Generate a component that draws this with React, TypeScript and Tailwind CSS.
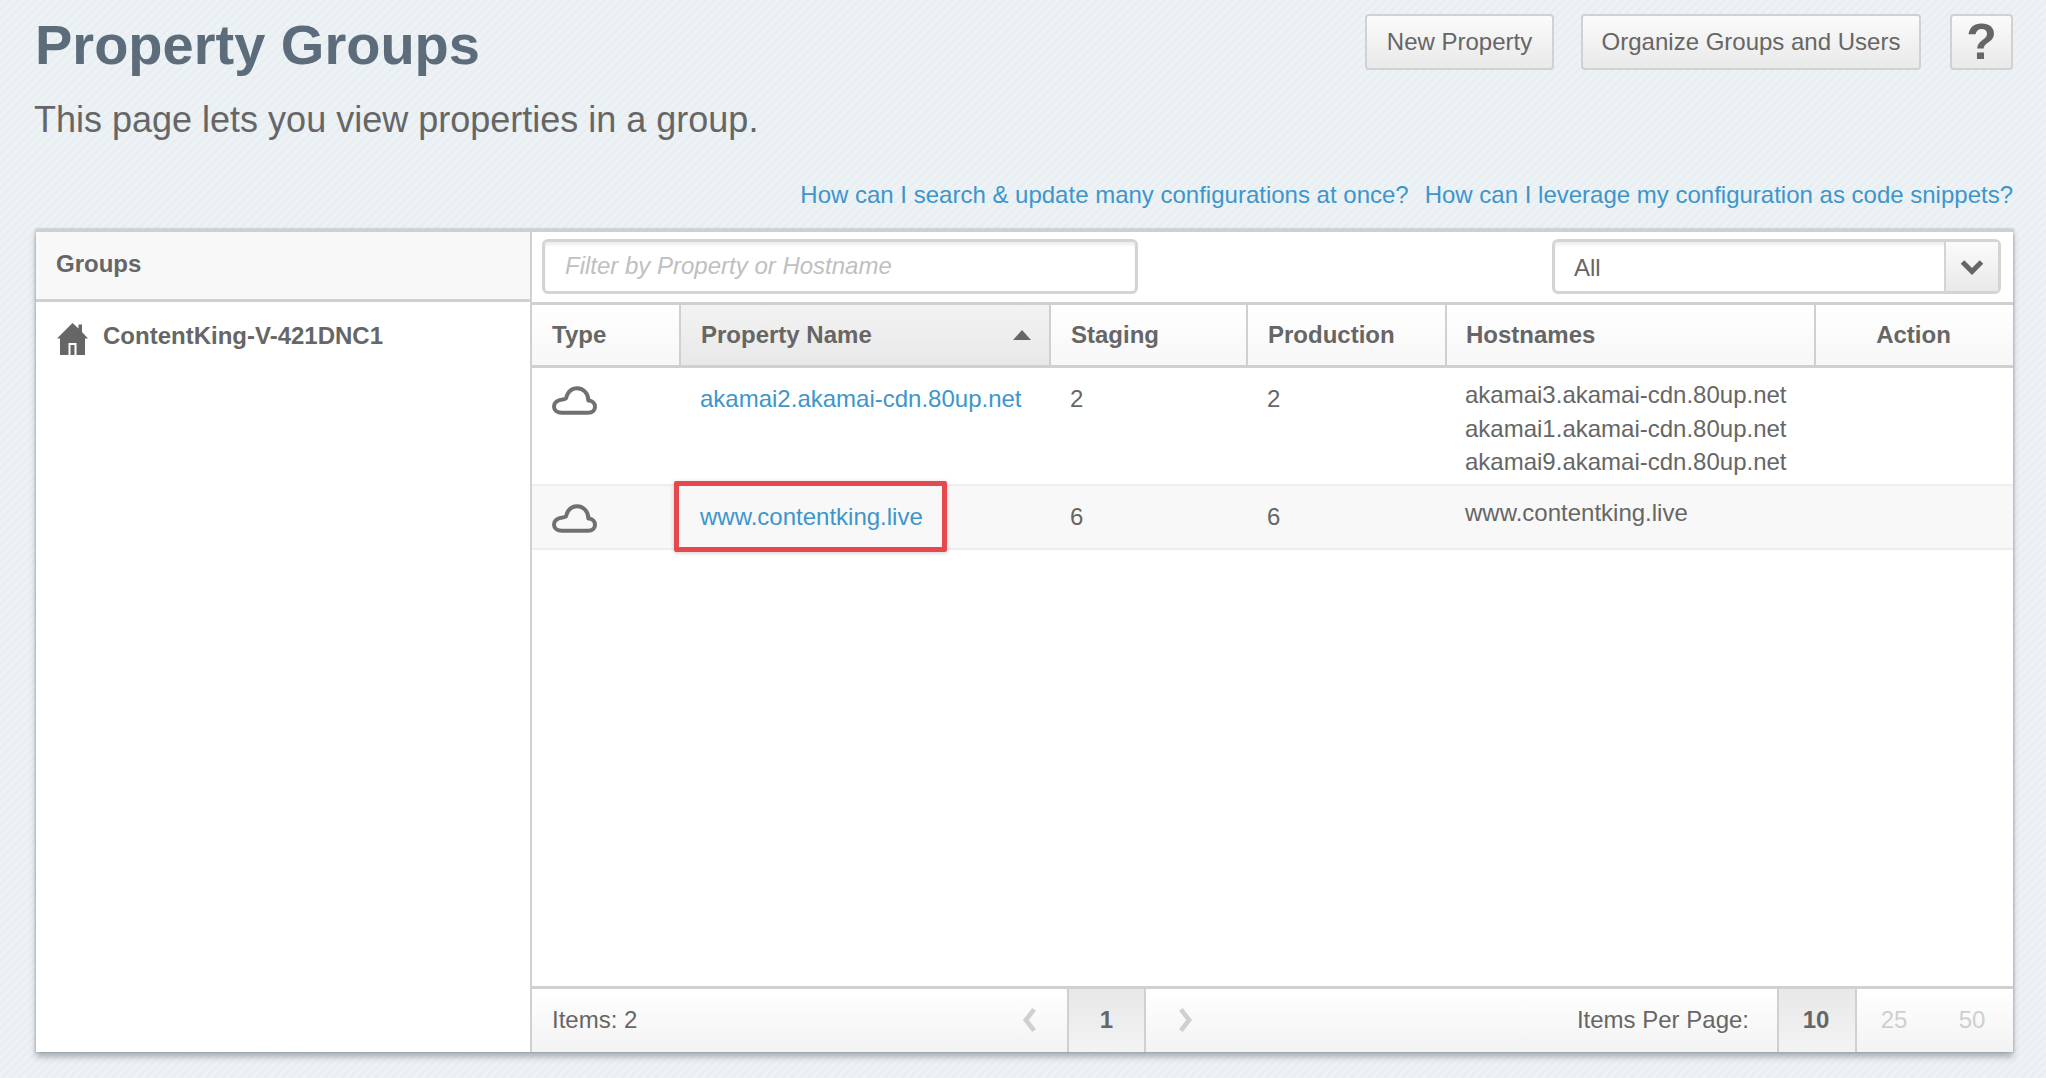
import React from "react";

const Cloud = () => (
  <svg width="45" height="29" viewBox="0 0 45 29" fill="none" stroke="#707070" strokeWidth="4" strokeLinejoin="round" className="block">
    <path d="M10 26.8 H36 C40.6 26.8 43 24.2 43 20.8 C43 17.2 40.4 14.8 36.4 14.6 C36.4 7.6 31.4 2.2 25.2 2.2 C20.6 2.2 17 4.6 15 9.2 C14 13 14 13 10.6 13.4 C5.2 14 2 16.8 2 20.4 C2 24.2 5 26.8 10 26.8 Z" />
  </svg>
);

const Home = () => (
  <svg width="31" height="32" viewBox="0 0 31 32" className="block" fill="#666">
    <path d="M15.5 0 L21.5 5.6 V1.5 H25 V9 L31 15.5 H28 V32 H19.5 V20 H11.5 V32 H3 V15.5 H0 Z" />
    <path d="M13.5 22 H17.5 V32 H13.5 Z" />
  </svg>
);

const Chevron = ({ dir, color, size = 15 }: { dir: "l" | "r" | "d"; color: string; size?: number }) => {
  if (dir === "d")
    return (
      <svg width="24" height="16" viewBox="0 0 24 16" fill="none" stroke={color} strokeWidth="5">
        <path d="M2.5 3 L12 12.5 L21.5 3" />
      </svg>
    );
  return (
    <svg width={size} height="24" viewBox="0 0 15 26" fill="none" stroke={color} strokeWidth="5">
      <path d={dir === "l" ? "M12.5 1.5 L3.5 13 L12.5 24.5" : "M2.5 1.5 L11.5 13 L2.5 24.5"} />
    </svg>
  );
};

const btn =
  "h-[56px] flex items-center justify-center rounded-[4px] border-2 border-[#cfd1d2] bg-gradient-to-b from-[#fbfbfb] to-[#e9e9e9] text-[24px] text-[#666]";

const th = "flex items-center border-r-2 border-[#d0d0d0] pl-[20px] font-bold";

export default function App() {
  return (
    <div className="h-[1078px] w-[2046px] overflow-hidden bg-[repeating-linear-gradient(135deg,#e8eef2_0px,#e8eef2_3px,#edf2f5_3px,#edf2f5_6px)] font-['Liberation_Sans',Arial,sans-serif] text-[24px] text-[#666]">
      <div className="flex h-[229px] flex-col pl-[35px] pr-[33px]">
        <div className="flex items-start justify-between">
          <div>
            <h1 className="pt-[11px] text-[56px] font-bold leading-[68px] text-[#5d6c7b]">Property Groups</h1>
            <p className="-ml-[1px] pt-[17px] text-[36px] leading-[48px]">This page lets you view properties in a group.</p>
          </div>
          <div className="flex gap-[29px] pt-[14px]">
            <div className={`${btn} -mr-[2px] w-[189px]`}>New Property</div>
            <div className={`${btn} w-[340px]`}>Organize Groups and Users</div>
            <div className={`${btn} w-[63px] text-[50px] font-bold`}>?</div>
          </div>
        </div>
        <div className="flex justify-end gap-[16px] pt-[35px] leading-[32px] text-[#3d96cb]">
          <span>How can I search &amp; update many configurations at once?</span>
          <span>How can I leverage my configuration as code snippets?</span>
        </div>
      </div>

      <div className="ml-[36px] flex h-[823px] w-[1977px] border-t-[3px] border-[#d0d0d0] bg-white shadow-[0_5px_6px_rgba(90,100,110,0.45),-1px_0_2px_rgba(90,100,110,0.25),1px_0_2px_rgba(90,100,110,0.25)]">
        <div className="flex w-[496px] shrink-0 flex-col border-r-2 border-[#d0d0d0]">
          <div className="flex h-[70px] items-center border-b-[3px] border-[#d0d0d0] bg-[#f8f8f8] pb-[3px] pl-[20px] font-bold">Groups</div>
          <div className="flex items-center gap-[15px] pl-[21px] pt-[19px] font-bold">
            <Home />
            <span className="-translate-y-[3px]">ContentKing-V-421DNC1</span>
          </div>
        </div>

        <div className="flex min-w-0 flex-1 flex-col">
          <div className="flex h-[70px] items-start justify-between pl-[10px] pr-[12px] pt-[7px]">
            <div className="flex h-[55px] w-[596px] items-center rounded-[6px] border-[3px] border-[#d4d4d4] pb-[2px] pl-[20px] italic text-[#c0c0c0] shadow-[inset_0_3px_3px_rgba(0,0,0,0.07)]">
              Filter by Property or Hostname
            </div>
            <div className="flex h-[55px] w-[449px] rounded-[6px] border-[3px] border-[#d4d4d4] shadow-[inset_0_3px_3px_rgba(0,0,0,0.07)]">
              <div className="flex flex-1 items-center pl-[19px] pt-[2px]">All</div>
              <div className="flex w-[54px] items-center justify-center border-l-2 border-[#d4d4d4] bg-gradient-to-b from-[#fbfbfb] to-[#e9e9e9]">
                <Chevron dir="d" color="#666" />
              </div>
            </div>
          </div>

          <div className="grid h-[66px] grid-cols-[149px_370px_197px_199px_369px_1fr] border-y-[3px] border-[#d0d0d0] bg-gradient-to-b from-white to-[#f7f7f7]">
            <div className={th}>Type</div>
            <div className={`${th} justify-between bg-gradient-to-b from-[#f3f3f3] to-[#e8e8e8] pr-[18px]`}>
              Property Name
              <svg width="18" height="10" viewBox="0 0 18 10" fill="#666"><path d="M9 0 L18 10 H0 Z" /></svg>
            </div>
            <div className={th}>Staging</div>
            <div className={th}>Production</div>
            <div className="flex items-center border-r-2 border-[#d0d0d0] pl-[19px] font-bold">Hostnames</div>
            <div className="flex items-center justify-center pr-[2px] font-bold">Action</div>
          </div>

          <div className="grid h-[118px] grid-cols-[149px_370px_197px_199px_369px_1fr] border-b-2 border-[#eeeeee]">
            <div className="pl-[20px] pt-[18px]"><Cloud /></div>
            <div className="pl-[19px] pt-[14px] leading-[33px] text-[#3d96cb]">akamai2.akamai-cdn.80up.net</div>
            <div className="pl-[19px] pt-[14px] leading-[33px]">2</div>
            <div className="pl-[19px] pt-[14px] leading-[33px]">2</div>
            <div className="pl-[18px] pt-[10px] leading-[33.5px]">
              <div>akamai3.akamai-cdn.80up.net</div>
              <div>akamai1.akamai-cdn.80up.net</div>
              <div>akamai9.akamai-cdn.80up.net</div>
            </div>
            <div />
          </div>

          <div className="grid h-[64px] grid-cols-[149px_370px_197px_199px_369px_1fr] border-b-2 border-[#eeeeee] bg-[#f8f8f8]">
            <div className="pl-[20px] pt-[18px]"><Cloud /></div>
            <div className="relative pl-[19px] pt-[14px] leading-[33px] text-[#3d96cb]">
              www.contentking.live
              <div className="absolute left-[-7px] top-[-5px] h-[71px] w-[273px] rounded-[2px] border-[5px] border-[#e5484d] shadow-[0_1px_4px_rgba(0,0,0,0.2)]" />
            </div>
            <div className="pl-[19px] pt-[14px] leading-[33px]">6</div>
            <div className="pl-[19px] pt-[14px] leading-[33px]">6</div>
            <div className="pl-[18px] pt-[10px] leading-[33px]">www.contentking.live</div>
            <div />
          </div>

          <div className="flex-1" />

          <div className="flex h-[66px] items-stretch border-t-[3px] border-[#d0d0d0] bg-gradient-to-b from-white to-[#f3f3f3] pb-[2px]">
            <div className="flex w-[535px] items-center pl-[20px]">
              <span className="flex-1">Items: 2</span>
              <span className="flex pr-[30px]"><Chevron dir="l" color="#cfcfcf" /></span>
            </div>
            <div className="-mb-[2px] flex w-[79px] items-center justify-center border-x-2 border-[#d0d0d0] bg-gradient-to-b from-[#e8e8e8] to-[#f3f3f3] pb-[2px] font-bold">1</div>
            <div className="flex w-[78px] items-center justify-center"><Chevron dir="r" color="#cfcfcf" /></div>
            <div className="flex flex-1 items-center justify-end pr-[28px]">Items Per Page:</div>
            <div className="-mb-[2px] flex w-[80px] items-center justify-center border-x-2 border-[#d0d0d0] bg-gradient-to-b from-[#e8e8e8] to-[#f3f3f3] pb-[2px] pr-[2px] font-bold">10</div>
            <div className="flex w-[74px] items-center justify-center text-[#cfcfcf]">25</div>
            <div className="flex w-[82px] items-center justify-center text-[#cfcfcf]">50</div>
          </div>
        </div>
      </div>
    </div>
  );
}
